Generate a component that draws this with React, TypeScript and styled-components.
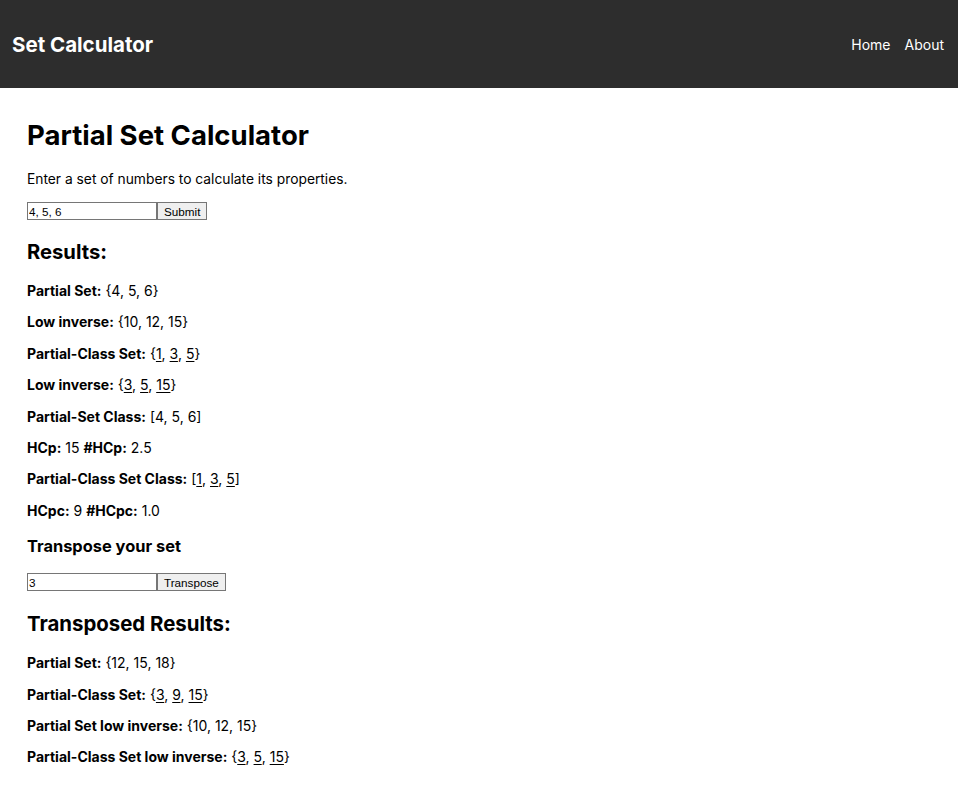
import React, { useState } from "react";
import styled, { createGlobalStyle } from "styled-components";

const Global = createGlobalStyle`
  html, body { margin: 0; padding: 0; background: #fff; }
  body { font-family: Inter, "Noto Sans", sans-serif; color: #000; }
`;

const Header = styled.header`
  height: 88px;
  background: #2d2d2d;
  display: flex;
  align-items: center;
  justify-content: space-between;
  padding: 0 14px 0 12px;
  box-sizing: border-box;
`;

const Brand = styled.div`
  color: #fff;
  font-size: 20.5px;
  font-weight: 700;
`;

const Nav = styled.nav`
  display: flex;
  gap: 14px;
`;

const NavLink = styled.a`
  color: #fff;
  font-size: 14px;
  text-decoration: none;
`;

const Main = styled.main`
  padding: 30px 27px;
  display: flex;
  flex-direction: column;
  align-items: flex-start;
`;

const Title = styled.h1`
  font-size: 27.5px;
  line-height: 34px;
  font-weight: 700;
  margin: 0 0 18px;
`;

const Intro = styled.p`
  font-size: 13.8px;
  line-height: 17px;
  margin: 1px 0 14px;
`;

const Form = styled.form<{ $after: number }>`
  display: flex;
  margin: 0 0 ${(p) => p.$after}px;
`;

const Input = styled.input`
  width: 130px;
  height: 18px;
  box-sizing: border-box;
  border: 1px solid #767676;
  padding: 0 1px;
  font-family: "Liberation Sans", Arial, sans-serif;
  font-size: 11.7px;
  color: #000;
  outline: none;
`;

const Button = styled.button`
  height: 18px;
  box-sizing: border-box;
  border: 1px solid #767676;
  background: #efefef;
  padding: 0 6px;
  font-family: "Liberation Sans", Arial, sans-serif;
  font-size: 11.7px;
  color: #000;
`;

const Heading = styled.h2<{ $size: number; $top?: number; $bottom?: number }>`
  font-size: ${(p) => p.$size}px;
  line-height: 24px;
  font-weight: 700;
  margin: ${(p) => p.$top ?? 0}px 0 ${(p) => p.$bottom ?? 18}px;
`;

const Line = styled.p`
  font-size: 14px;
  line-height: 17.4px;
  margin: 0 0 14px;
`;

const Label = styled.strong`
  font-weight: 700;
`;

const U = styled.span`
  text-decoration: underline;
  text-decoration-thickness: 1px;
  text-underline-offset: 2px;
`;

const Under = ({ nums, open, close }: { nums: number[]; open: string; close: string }) => (
  <span>
    {open}
    {nums.map((n, i) => (
      <React.Fragment key={i}>
        <U>{n}</U>
        {i < nums.length - 1 ? ", " : ""}
      </React.Fragment>
    ))}
    {close}
  </span>
);

export default function App() {
  const [setVal, setSetVal] = useState("4, 5, 6");
  const [tVal, setTVal] = useState("3");
  return (
    <>
      <Global />
      <Header>
        <Brand>Set Calculator</Brand>
        <Nav>
          <NavLink href="#">Home</NavLink>
          <NavLink href="#">About</NavLink>
        </Nav>
      </Header>
      <Main>
        <Title>Partial Set Calculator</Title>
        <Intro>Enter a set of numbers to calculate its properties.</Intro>
        <Form $after={20} onSubmit={(e) => e.preventDefault()}>
          <Input value={setVal} onChange={(e) => setSetVal(e.target.value)} />
          <Button type="submit">Submit</Button>
        </Form>
        <Heading $size={20.2}>Results:</Heading>
        <Line><Label>Partial Set:</Label> {"{4, 5, 6}"}</Line>
        <Line><Label>Low inverse:</Label> {"{10, 12, 15}"}</Line>
        <Line><Label>Partial-Class Set:</Label> <Under nums={[1, 3, 5]} open="{" close="}" /></Line>
        <Line><Label>Low inverse:</Label> <Under nums={[3, 5, 15]} open="{" close="}" /></Line>
        <Line><Label>Partial-Set Class:</Label> [4, 5, 6]</Line>
        <Line><Label>HCp:</Label> 15 <Label>#HCp:</Label> 2.5</Line>
        <Line><Label>Partial-Class Set Class:</Label> <Under nums={[1, 3, 5]} open="[" close="]" /></Line>
        <Line><Label>HCpc:</Label> 9 <Label>#HCpc:</Label> 1.0</Line>
        <Heading as="h3" $size={16.4} $top={1} $bottom={15}>Transpose your set</Heading>
        <Form $after={18} onSubmit={(e) => e.preventDefault()}>
          <Input value={tVal} onChange={(e) => setTVal(e.target.value)} />
          <Button type="submit">Transpose</Button>
        </Form>
        <Heading $size={20.4} $top={3} $bottom={18}>Transposed Results:</Heading>
        <Line><Label>Partial Set:</Label> {"{12, 15, 18}"}</Line>
        <Line><Label>Partial-Class Set:</Label> <Under nums={[3, 9, 15]} open="{" close="}" /></Line>
        <Line><Label>Partial Set low inverse:</Label> {"{10, 12, 15}"}</Line>
        <Line><Label>Partial-Class Set low inverse:</Label> <Under nums={[3, 5, 15]} open="{" close="}" /></Line>
      </Main>
    </>
  );
}
